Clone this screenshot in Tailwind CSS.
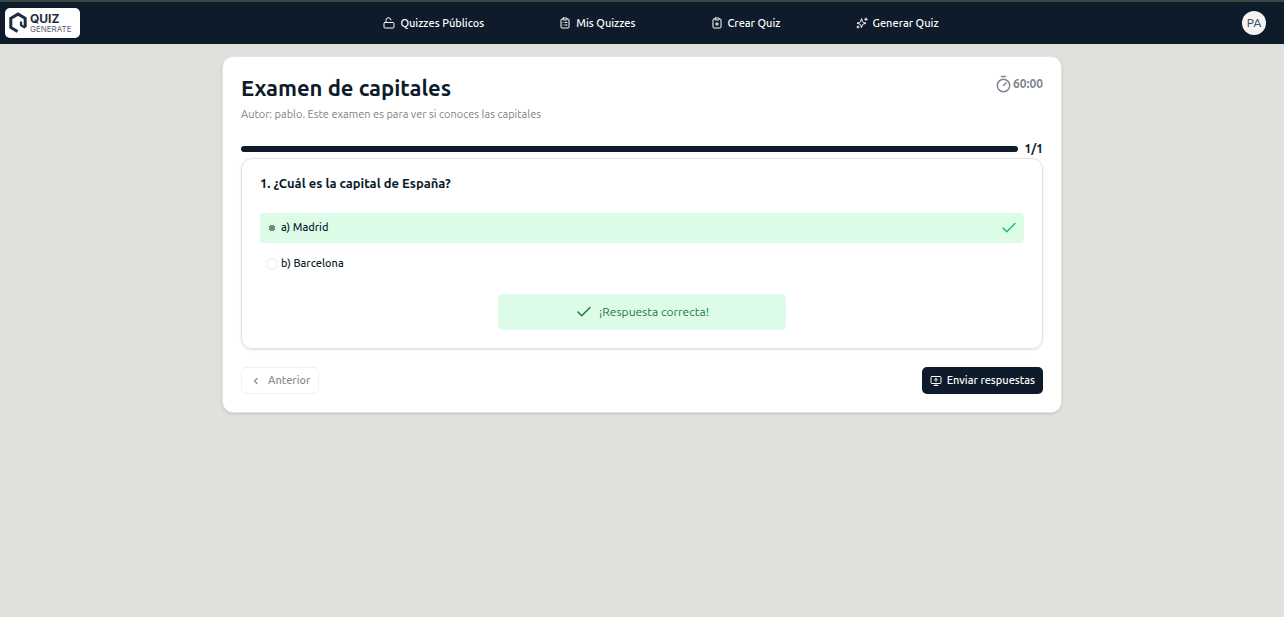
<!DOCTYPE html>
<html lang="es">
<head>
<meta charset="utf-8">
<meta name="viewport" content="width=device-width, initial-scale=1">
<title>Quiz Generate</title>
<script src="https://cdn.jsdelivr.net/npm/@tailwindcss/browser@4"></script>
</head>
<body class="min-h-screen bg-[#e0e1dc] font-['Ubuntu','Noto_Sans',sans-serif] text-[11px] leading-4 text-[#0d1b2a]">
<header class="flex h-11 items-center justify-between border-t-2 border-[#394643] bg-[#0d1b2a] pr-[18px] pl-[5px] text-white">
  <a href="#" aria-label="Quiz Generate" class="flex h-[30px] w-[75px] items-center gap-[3px] rounded-[5px] bg-white pl-[4px] text-[#1f2d42]">
    <svg class="h-[22px] w-[18px] shrink-0" viewBox="0 0 18 22" fill="none" stroke="currentColor" stroke-width="3"><path d="M8.500 19.500 1.800 15.500V6.300L9 2.100l7.200 4.200v9"/><path d="M16.200 15.800 12 13.200V9.500" stroke-width="2.200"/></svg>
    <span class="flex flex-col font-['Inter',sans-serif]">
      <span class="text-[12px] leading-[11px] font-bold">QUIZ</span>
      <span class="text-[8px] leading-[10px] text-[#59657a]">GENERATE</span>
    </span>
  </a>
  <nav class="flex items-center gap-[75px] font-medium">
    <a href="#" class="flex items-center gap-[5px]">
      <svg class="size-3" viewBox="0 0 24 24" fill="none" stroke="currentColor" stroke-width="2" stroke-linecap="round" stroke-linejoin="round"><rect x="2" y="11" width="20" height="11" rx="2"/><path d="M6 11V7a5 5 0 0 1 10-1"/></svg>
      Quizzes Públicos</a>
    <a href="#" class="flex items-center gap-[5px]">
      <svg class="size-3" viewBox="0 0 24 24" fill="none" stroke="currentColor" stroke-width="2" stroke-linecap="round" stroke-linejoin="round"><rect x="8" y="2" width="8" height="4" rx="1"/><path d="M16 4h2a2 2 0 0 1 2 2v14a2 2 0 0 1-2 2H6a2 2 0 0 1-2-2V6a2 2 0 0 1 2-2h2M12 11h4M12 16h4M8 11h.01M8 16h.01"/></svg>
      Mis Quizzes</a>
    <a href="#" class="flex items-center gap-[5px]">
      <svg class="size-3" viewBox="0 0 24 24" fill="none" stroke="currentColor" stroke-width="2" stroke-linecap="round" stroke-linejoin="round"><rect x="8" y="2" width="8" height="4" rx="1"/><path d="M16 4h2a2 2 0 0 1 2 2v14a2 2 0 0 1-2 2H6a2 2 0 0 1-2-2V6a2 2 0 0 1 2-2h2M9 14h6M12 17v-6"/></svg>
      Crear Quiz</a>
    <a href="#" class="flex items-center gap-[5px]">
      <svg class="size-3" viewBox="0 0 24 24" fill="none" stroke="currentColor" stroke-width="2" stroke-linecap="round" stroke-linejoin="round"><path d="m11 4-1.900 5.300a2 2 0 0 1-1.300 1.300L2 12.500l5.800 1.900a2 2 0 0 1 1.300 1.300L11 21l1.900-5.300a2 2 0 0 1 1.300-1.300l5.800-1.900-5.800-1.900a2 2 0 0 1-1.300-1.300ZM4 18v4M2 20h4M20 2v5M17.500 4.500h5"/></svg>
      Generar Quiz</a>
  </nav>
  <button type="button" class="size-6 rounded-full bg-[#f4f4f5] text-center text-[12px] text-[#26364b]">PA</button>
</header>
<main class="px-4 pt-3">
  <section class="mx-auto max-w-[840px] rounded-[11px] border border-[#e4e4e7] bg-white px-[18px] pt-[18px] pb-[18px] shadow-sm">
    <div class="flex items-start justify-between">
      <div>
        <h1 class="text-[22px] leading-[26px] font-semibold">Examen de capitales</h1>
        <p class="mt-[5px] text-[#7f7f7f]">Autor: pablo. Este examen es para ver si conoces las capitales</p>
      </div>
      <div class="flex items-center gap-[2px] text-[12px] leading-[18px] font-semibold text-[#808791]">
        <svg class="h-[18px] w-[15px]" viewBox="0 0 15 18" fill="none" stroke="currentColor" stroke-width="1.500" stroke-linecap="round"><circle cx="7.500" cy="10.500" r="6.200"/><path d="M5.500 1.500h4M7.500 10.500l2.500-2.500"/></svg>
        60:00
      </div>
    </div>
    <div class="mt-[18px] flex items-center gap-[6px]">
      <div role="progressbar" aria-label="Progreso" aria-valuenow="1" aria-valuemin="0" aria-valuemax="1" class="h-[6px] flex-1 rounded-full bg-[#0d1b2a]"></div>
      <span class="text-[12px] leading-[18px] font-bold">1/1</span>
    </div>
    <form>
      <fieldset class="rounded-[11px] border border-[#e4e4e7] px-[18px] pt-4 pb-[18px] shadow-sm">
        <h2 class="text-[13px] leading-4 font-semibold">1. ¿Cuál es la capital de España?</h2>
        <label class="mt-[22px] flex h-[30px] items-center gap-[3px] rounded-[4px] bg-[#dcfce7] px-[6px] font-medium">
          <input type="radio" name="capital" checked class="size-3 appearance-none rounded-full border border-[#d5f3df] bg-[radial-gradient(circle,#718b7e_0_3px,transparent_3px)]">
          <span class="flex-1 pb-[2px]">a) Madrid</span>
          <svg class="size-[18px]" viewBox="0 0 24 24" fill="none" stroke="#18c45c" stroke-width="2" stroke-linecap="round" stroke-linejoin="round"><path d="M20 6 9 17l-5-5"/></svg>
        </label>
        <label class="mt-[6px] flex h-[30px] items-center gap-[3px] px-[6px] font-medium">
          <input type="radio" name="capital" class="size-3 appearance-none rounded-full border border-[#efefef] bg-white">
          <span class="pb-[2px]">b) Barcelona</span>
        </label>
        <p role="status" class="mx-auto mt-[15px] flex h-9 w-[288px] items-center justify-center gap-[6px] rounded-[5px] bg-[#dcfce7] text-[12px] text-[#1a7a42]">
          <svg class="size-[18px]" viewBox="0 0 24 24" fill="none" stroke="currentColor" stroke-width="2" stroke-linecap="round" stroke-linejoin="round"><path d="M20 6 9 17l-5-5"/></svg>
          ¡Respuesta correcta!
        </p>
      </fieldset>
      <div class="mt-[18px] flex justify-between">
        <button type="button" disabled class="flex h-[27px] items-center gap-[6px] rounded-[5px] border border-[#f1f1f2] px-[8px] font-medium text-[#868d95]">
          <svg class="size-3" viewBox="0 0 24 24" fill="none" stroke="currentColor" stroke-width="2.500" stroke-linecap="round" stroke-linejoin="round"><path d="m14 7-5 5 5 5"/></svg>
          <span class="pb-px">Anterior</span></button>
        <button type="submit" class="flex h-[27px] items-center gap-[5px] rounded-[5px] bg-[#0d1b2a] px-[8px] font-medium text-white">
          <svg class="size-3" viewBox="0 0 24 24" fill="none" stroke="currentColor" stroke-width="2" stroke-linecap="round" stroke-linejoin="round"><rect x="2" y="3" width="20" height="14" rx="2"/><path d="M8 21h8M12 17v4M12 13V7M9 10l3-3 3 3"/></svg>
          <span class="pb-px">Enviar respuestas</span></button>
      </div>
    </form>
  </section>
</main>
</body>
</html>
